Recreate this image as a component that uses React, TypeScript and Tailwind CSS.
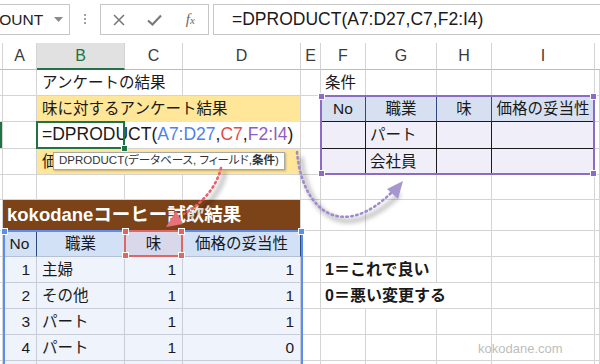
import React from "react";

const FONT = "font-['Liberation_Sans','Noto_Sans_CJK_JP',sans-serif]";

const COL = ["", "col-start-1", "col-start-2", "col-start-3", "col-start-4", "col-start-5", "col-start-6", "col-start-7", "col-start-8", "col-start-9", "col-start-10", "col-start-11"];
const ROW = ["", "row-start-1", "row-start-2", "row-start-3", "row-start-4", "row-start-5", "row-start-6", "row-start-7", "row-start-8", "row-start-9", "row-start-10", "row-start-11", "row-start-12", "row-start-13"];
const SPAN = ["", "col-span-1", "col-span-2", "col-span-3", "col-span-4"];

// plain sheet gridline
const GRID = "border-r border-b border-[#d4d4d4]";
// right-hand criteria table (F2:I4)
const TH_R = "bg-[#d7e0f1] justify-center border-r border-b border-r-[#2c4a7e] border-b-[#1a1a1a]";
const TD_R = "bg-[#f0eef8] border-r border-b border-r-[#1a1a1a] border-b-[#1a1a1a]";
// left-hand data table (A7:D27)
const TH_L = "bg-[#d2e1f5] justify-center border-r border-b border-r-[#2c4a7e] border-b-[#b4c0d4]";
const TD_L = "bg-[#eef3fc] border-r border-b border-[#c8ccd6]";

type CellProps = {
  c: number;
  r: number;
  span?: number;
  cls?: string;
  children?: React.ReactNode;
};

const Cell = ({ c, r, span = 1, cls = "", children }: CellProps) => (
  <div className={`${COL[c]} ${ROW[r]} ${SPAN[span]} flex items-center whitespace-nowrap overflow-hidden min-w-0 ${cls}`}>
    {children}
  </div>
);

const empties = (r: number, cols: number[]) =>
  cols.map((c) => <Cell key={`e-${r}-${c}`} c={c} r={r} cls={GRID} />);

const Handle = ({ pos, color }: { pos: string; color: string }) => (
  <span className={`absolute w-[7px] h-[7px] border border-white ${pos} ${color}`} />
);

const letters = ["A", "B", "C", "D", "E", "F", "G", "H", "I"];

const rows = [
  { no: "1", job: "主婦", taste: "1", price: "1" },
  { no: "2", job: "その他", taste: "1", price: "1" },
  { no: "3", job: "パート", taste: "1", price: "1" },
  { no: "4", job: "パート", taste: "1", price: "0" },
];

// colored = range references tinted like Excel's edit mode
const Formula = ({ colored }: { colored: boolean }) => (
  <span className="font-['Liberation_Sans',sans-serif] text-[17.5px] leading-none whitespace-nowrap">
    =DPRODUCT(
    <span className={colored ? "text-[#4f81e6]" : ""}>A7:D27</span>,
    <span className={colored ? "text-[#e24c4c]" : ""}>C7</span>,
    <span className={colored ? "text-[#8f5cc4]" : ""}>F2:I4</span>)
  </span>
);

const Toolbar = () => (
  <div className="h-[43px] flex items-start pt-[4px]">
    <div className="-ml-px w-[71px] h-[31px] border border-[#c6c6c6] flex items-center overflow-hidden">
      <span className="-ml-[12px] text-[15.5px] text-[#222]">COUNT</span>
      <span className="flex-1" />
      <svg width="9" height="5" className="mr-[6px]">
        <path d="M0 0 L9 0 L4.5 5 Z" fill="#8a8a8a" />
      </svg>
    </div>
    <div className="ml-[14px] mt-[10px] flex flex-col gap-[2px]">
      <span className="w-[2px] h-[2px] bg-[#a0a0a0]" />
      <span className="w-[2px] h-[2px] bg-[#a0a0a0]" />
      <span className="w-[2px] h-[2px] bg-[#a0a0a0]" />
    </div>
    <div className="ml-[14px] w-[109px] h-[31px] border border-[#c6c6c6] flex items-center">
      <span className="w-[36px] flex justify-center">
        <svg width="12" height="12">
          <path d="M1 1 L11 11 M11 1 L1 11" stroke="#7a7a7a" strokeWidth="1.6" />
        </svg>
      </span>
      <span className="w-[37px] flex justify-center">
        <svg width="15" height="12">
          <path d="M1 6.5 L5.5 10.5 L14 1.5" stroke="#7a7a7a" strokeWidth="2.2" fill="none" />
        </svg>
      </span>
      <span className="w-[36px] flex justify-center font-['Liberation_Serif',serif] italic text-[15px] text-[#6a6a6a] leading-none">
        f<span className="text-[11px] mt-[3px]">x</span>
      </span>
    </div>
    <div className="ml-[4px] flex-1 -mr-px h-[31px] border border-[#c6c6c6] flex items-center pl-[18px] text-[#1a1a1a] overflow-hidden">
      <Formula colored={false} />
    </div>
  </div>
);

const Arrows = () => (
  <svg className="absolute left-0 top-0 pointer-events-none z-30" width="600" height="364">
    <defs>
      <filter id="blur" x="-20%" y="-20%" width="140%" height="140%">
        <feGaussianBlur stdDeviation="2.2" />
      </filter>
    </defs>
    <path d="M225 172 Q 219 200 189 219" stroke="rgba(0,0,0,0.22)" strokeWidth="5" fill="none" filter="url(#blur)" />
    <path d="M301 157 C 307 220, 349 244, 400 194" stroke="rgba(0,0,0,0.22)" strokeWidth="5" fill="none" filter="url(#blur)" />
    <path d="M221 168 Q 214 196 184 214" stroke="#e8606a" strokeWidth="2.6" strokeDasharray="1.5 3.5" strokeLinecap="round" fill="none" />
    <polygon points="166,227 183,224 176,211" fill="#e8707a" />
    <path d="M297 152 C 303 215, 345 240, 393 191" stroke="#9f8bcb" strokeWidth="2.6" strokeDasharray="1.5 3.5" strokeLinecap="round" fill="none" />
    <polygon points="403,181 387,189 398,199" fill="#a796cf" />
  </svg>
);

export default function App() {
  return (
    <div className={`relative w-[600px] h-[364px] overflow-hidden bg-white text-[#1a1a1a] ${FONT}`}>
      <Toolbar />
      <div className="grid grid-cols-[3px_34px_88px_58px_118px_20px_45px_71px_55px_103px_1fr] grid-rows-[27px_26px_26px_27px_26px_25px_31px_26px_26px_26px_26px_26px_26px] text-[15.5px] leading-none">
        {/* column headers */}
        <Cell c={1} r={1} cls="border-r border-b border-r-[#d4d4d4] border-b-[#bcbcbc]" />
        {letters.map((l, i) => (
          <Cell
            key={l}
            c={i + 2}
            r={1}
            cls={
              l === "B"
                ? "justify-center text-[16px] bg-[#e1e1e1] text-[#217346] border-r border-b-2 border-r-[#d4d4d4] border-b-[#217346]"
                : "justify-center text-[16px] text-[#3b3b3b] border-r border-b border-r-[#d4d4d4] border-b-[#bcbcbc]"
            }
          >
            {l}
          </Cell>
        ))}
        <Cell c={11} r={1} cls="border-b border-b-[#bcbcbc]" />

        {/* row 1 */}
        {empties(2, [1, 2])}
        <Cell c={3} r={2} span={2} cls={`${GRID} pl-[5px]`}>アンケートの結果</Cell>
        {empties(2, [5, 6])}
        <Cell c={7} r={2} cls={`${GRID} pl-[4px]`}>条件</Cell>
        {empties(2, [8, 9, 10, 11])}

        {/* row 2 */}
        {empties(3, [1, 2])}
        <Cell c={3} r={3} span={3} cls="bg-[#ffe699] border-r border-r-[#d4d4d4] pl-[5px]">味に対するアンケート結果</Cell>
        {empties(3, [6])}
        <Cell c={7} r={3} cls={TH_R}>No</Cell>
        <Cell c={8} r={3} cls={TH_R}>職業</Cell>
        <Cell c={9} r={3} cls={TH_R}>味</Cell>
        <Cell c={10} r={3} cls={TH_R}>価格の妥当性</Cell>
        {empties(3, [11])}

        {/* row 3 */}
        <Cell c={1} r={4} cls="bg-[#217346] border-r border-b border-[#d4d4d4]" />
        {empties(4, [2])}
        <Cell c={3} r={4} span={3} cls={`${GRID} pl-[5px]`}>
          <Formula colored />
        </Cell>
        {empties(4, [6])}
        <Cell c={7} r={4} cls={TD_R} />
        <Cell c={8} r={4} cls={`${TD_R} pl-[4px]`}>パート</Cell>
        <Cell c={9} r={4} cls={TD_R} />
        <Cell c={10} r={4} cls={TD_R} />
        {empties(4, [11])}

        {/* row 4 */}
        {empties(5, [1, 2])}
        <Cell c={3} r={5} span={3} cls="bg-[#ffe699] border-r border-b border-[#d4d4d4] pl-[5px]">価格に対するアンケート結果</Cell>
        {empties(5, [6])}
        <Cell c={7} r={5} cls={TD_R} />
        <Cell c={8} r={5} cls={`${TD_R} pl-[4px]`}>会社員</Cell>
        <Cell c={9} r={5} cls={TD_R} />
        <Cell c={10} r={5} cls={TD_R} />
        {empties(5, [11])}

        {/* row 5 */}
        {empties(6, [1, 2, 3, 4, 5, 6, 7, 8, 9, 10, 11])}

        {/* row 6 */}
        {empties(7, [1])}
        <Cell c={2} r={7} span={4} cls="bg-[#7b4317] border-r border-r-[#d4d4d4] pl-[4px] text-white font-bold text-[18.5px]">
          kokodaneコーヒー試飲結果
        </Cell>
        {empties(7, [6, 7, 8, 9, 10, 11])}

        {/* row 7 table header */}
        {empties(8, [1])}
        <Cell c={2} r={8} cls={TH_L}>No</Cell>
        <Cell c={3} r={8} cls={TH_L}>職業</Cell>
        <Cell c={4} r={8} cls={`${TH_L} bg-[#d8d8ea]`}>味</Cell>
        <Cell c={5} r={8} cls={TH_L}>価格の妥当性</Cell>
        {empties(8, [6, 7, 8, 9, 10, 11])}

        {/* data rows */}
        {rows.map((row, i) => {
          const r = i + 9;
          return (
            <React.Fragment key={row.no}>
              {empties(r, [1])}
              <Cell c={2} r={r} cls={`${TD_L} justify-end pr-[6px]`}>{row.no}</Cell>
              <Cell c={3} r={r} cls={`${TD_L} pl-[5px]`}>{row.job}</Cell>
              <Cell c={4} r={r} cls={`${TD_L} justify-end pr-[6px]`}>{row.taste}</Cell>
              <Cell c={5} r={r} cls={`${TD_L} justify-end pr-[6px]`}>{row.price}</Cell>
              {empties(r, [6])}
              {i === 0 && (
                <>
                  <Cell c={7} r={r} span={2} cls={`${GRID} pl-[4px] font-bold text-[16px]`}>1＝これで良い</Cell>
                  {empties(r, [9, 10, 11])}
                </>
              )}
              {i === 1 && (
                <>
                  <Cell c={7} r={r} span={3} cls={`${GRID} pl-[4px] font-bold text-[16px]`}>0＝悪い変更する</Cell>
                  {empties(r, [10, 11])}
                </>
              )}
              {i > 1 && empties(r, [7, 8, 9, 10, 11])}
            </React.Fragment>
          );
        })}

        {/* row 12 */}
        {empties(13, [1])}
        <Cell c={2} r={13} cls={TD_L} />
        <Cell c={3} r={13} cls={TD_L} />
        <Cell c={4} r={13} cls={TD_L} />
        <Cell c={5} r={13} cls={TD_L} />
        {empties(13, [6, 7, 8, 9, 10, 11])}

        {/* range highlights */}
        <div className="col-start-3 row-start-4 relative z-10 -ml-px -mt-px border-2 border-[#217346] pointer-events-none">
          <Handle pos="-right-[5px] -bottom-[5px]" color="bg-[#217346]" />
        </div>
        <div className="col-start-7 col-span-4 row-start-3 row-span-3 relative z-10 -ml-px -mt-px border-2 border-[#8b6bc3] pointer-events-none">
          <Handle pos="-left-[4px] -top-[4px]" color="bg-[#8b6bc3]" />
          <Handle pos="-right-[4px] -top-[4px]" color="bg-[#8b6bc3]" />
          <Handle pos="-left-[4px] -bottom-[4px]" color="bg-[#8b6bc3]" />
          <Handle pos="-right-[4px] -bottom-[4px]" color="bg-[#8b6bc3]" />
        </div>
        <div className="col-start-2 col-span-4 row-start-8 row-span-6 relative z-10 -mt-px -mr-[2px] border-2 border-[#5b8ef0] pointer-events-none">
          <Handle pos="-left-[4px] -top-[4px]" color="bg-[#5b8ef0]" />
          <Handle pos="-right-[4px] -top-[4px]" color="bg-[#5b8ef0]" />
        </div>
        <div className="col-start-4 row-start-8 relative z-10 -ml-px -mt-px border-2 border-[#e06666] pointer-events-none">
          <Handle pos="-left-[4px] -top-[4px]" color="bg-[#e06666]" />
          <Handle pos="-right-[4px] -top-[4px]" color="bg-[#e06666]" />
          <Handle pos="-left-[4px] -bottom-[4px]" color="bg-[#e06666]" />
          <Handle pos="-right-[4px] -bottom-[4px]" color="bg-[#e06666]" />
        </div>

        {/* function tooltip */}
        <div className="col-start-3 col-span-3 row-start-5 self-start justify-self-start z-20 ml-[16px] mt-[3px] h-[18px] px-[5px] flex items-center bg-white border border-[#a8a8a8] shadow-[1px_1px_2px_rgba(0,0,0,0.25)] text-[11.5px] text-[#333] whitespace-nowrap [font-feature-settings:'palt']">
          DPRODUCT(データベース, フィールド, <span className="font-bold">条件</span>)
        </div>

        {/* watermark */}
        <div className="col-start-9 col-span-2 row-start-12 self-center z-10 pl-[41px] text-[13px] text-[#bdbdbd] whitespace-nowrap">
          kokodane.com
        </div>
      </div>
      <Arrows />
    </div>
  );
}
